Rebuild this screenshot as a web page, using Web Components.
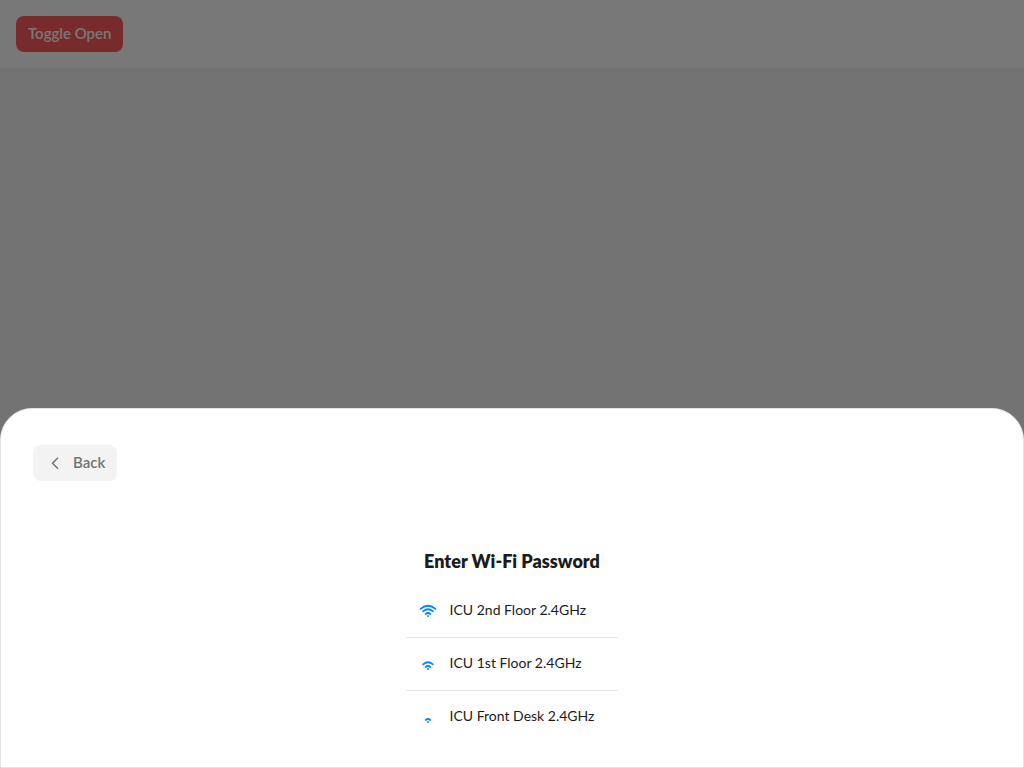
<!DOCTYPE html>
<html lang="en">
<head>
<meta charset="utf-8">
<meta name="viewport" content="width=device-width, initial-scale=1">
<title>Wi-Fi networks</title>
<style>
  html, body { margin: 0; min-height: 100vh; }
  body { background: #f5f5f5; color: #1c1c1c; font: 500 14px/20px Lato, "Liberation Sans", sans-serif; }
</style>
</head>
<body>
<app-header><app-button tone="danger">Toggle Open</app-button></app-header>
<bottom-sheet>
  <app-button slot="action" tone="muted" icon="back">Back</app-button>
  <network-list heading="Enter Wi-Fi Password">
    <network-item strength="3">ICU 2nd Floor 2.4GHz</network-item>
    <network-item strength="2">ICU 1st Floor 2.4GHz</network-item>
    <network-item strength="1">ICU Front Desk 2.4GHz</network-item>
  </network-list>
</bottom-sheet>
<script>
const define = (name, render) => customElements.define(name, class extends HTMLElement {
  constructor() {
    super();
    this.attachShadow({ mode: "open" }).innerHTML = render(this);
  }
});

define("app-header", () => `
  <style>
    :host { display: block; background: #fff; padding: 16px; }
    header { display: flex; }
  </style>
  <header><slot></slot></header>`);

define("app-button", el => `
  <style>
    :host { display: inline-flex; }
    button { display: flex; align-items: center; gap: 8px; height: 36px; padding: 0 12px;
      border: 0; border-radius: 8px; font: inherit; font-size: 15px; font-weight: 600; white-space: nowrap; cursor: pointer; }
    :host([tone="danger"]) button { background: #ff5b5b; color: #fff; }
    :host([tone="muted"]) button { background: #f3f3f3; color: #737373; }
    svg { width: 20px; height: 20px; }
    span { padding-bottom: 2px; }
  </style>
  <button type="button">${el.getAttribute("icon") === "back" ? `
    <svg viewBox="0 0 20 20" fill="none" stroke="currentColor" stroke-width="1.5" aria-hidden="true"><path d="M13 4.7 7.5 10.3 13 15.8"/></svg>` : ""}
    <span><slot></slot></span></button>`);

define("bottom-sheet", () => `
  <style>
    :host { position: fixed; inset: 0; display: flex; flex-direction: column; justify-content: flex-end;
      background: rgba(0, 0, 0, .53); }
    section { box-sizing: border-box; width: 100%; padding: 36px 32px 24px; background: #fff;
      border: 1px solid #e5e5e5; border-radius: 32px 32px 0 0; }
    .bar { display: flex; }
    .content { display: flex; justify-content: center; padding-top: 68px; }
  </style>
  <section role="dialog" aria-label="Wi-Fi networks">
    <div class="bar"><slot name="action"></slot></div>
    <div class="content"><slot></slot></div>
  </section>`);

define("network-list", el => `
  <style>
    :host { display: block; min-width: 212px; }
    h2 { margin: 0 0 12px; font-size: 18px; line-height: 24px; font-weight: 800; text-align: center; }
    ::slotted(:not(:last-child)) { border-bottom: 1px solid #e5e5e5; }
  </style>
  <h2>${el.getAttribute("heading")}</h2>
  <div role="list"><slot></slot></div>`);

const arcs = [
  "M7.7 13Q10 11 12.3 13",
  "M5.1 10.4Q10 6.2 14.9 10.4",
  "M2.6 7.9Q10 1.7 17.4 7.9"
];
define("network-item", el => `
  <style>
    :host { display: flex; align-items: center; gap: 12px; height: 52px; padding: 0 24px 0 12px; font-size: 14px; font-weight: 400; white-space: nowrap; }
    svg { width: 20px; height: 20px; color: #0a84ff; }
    span { padding-bottom: 2px; }
  </style>
  <svg viewBox="0 0 20 20" fill="none" stroke="currentColor" stroke-width="1.8" stroke-linecap="round" aria-hidden="true">
    ${arcs.slice(0, +el.getAttribute("strength")).map(d => `<path d="${d}"/>`).join("")}
    <circle cx="10" cy="15" r="1" fill="currentColor" stroke="none"/>
  </svg>
  <span><slot></slot></span>`);

document.querySelectorAll("network-item").forEach(item => item.setAttribute("role", "listitem"));
</script>
</body>
</html>
